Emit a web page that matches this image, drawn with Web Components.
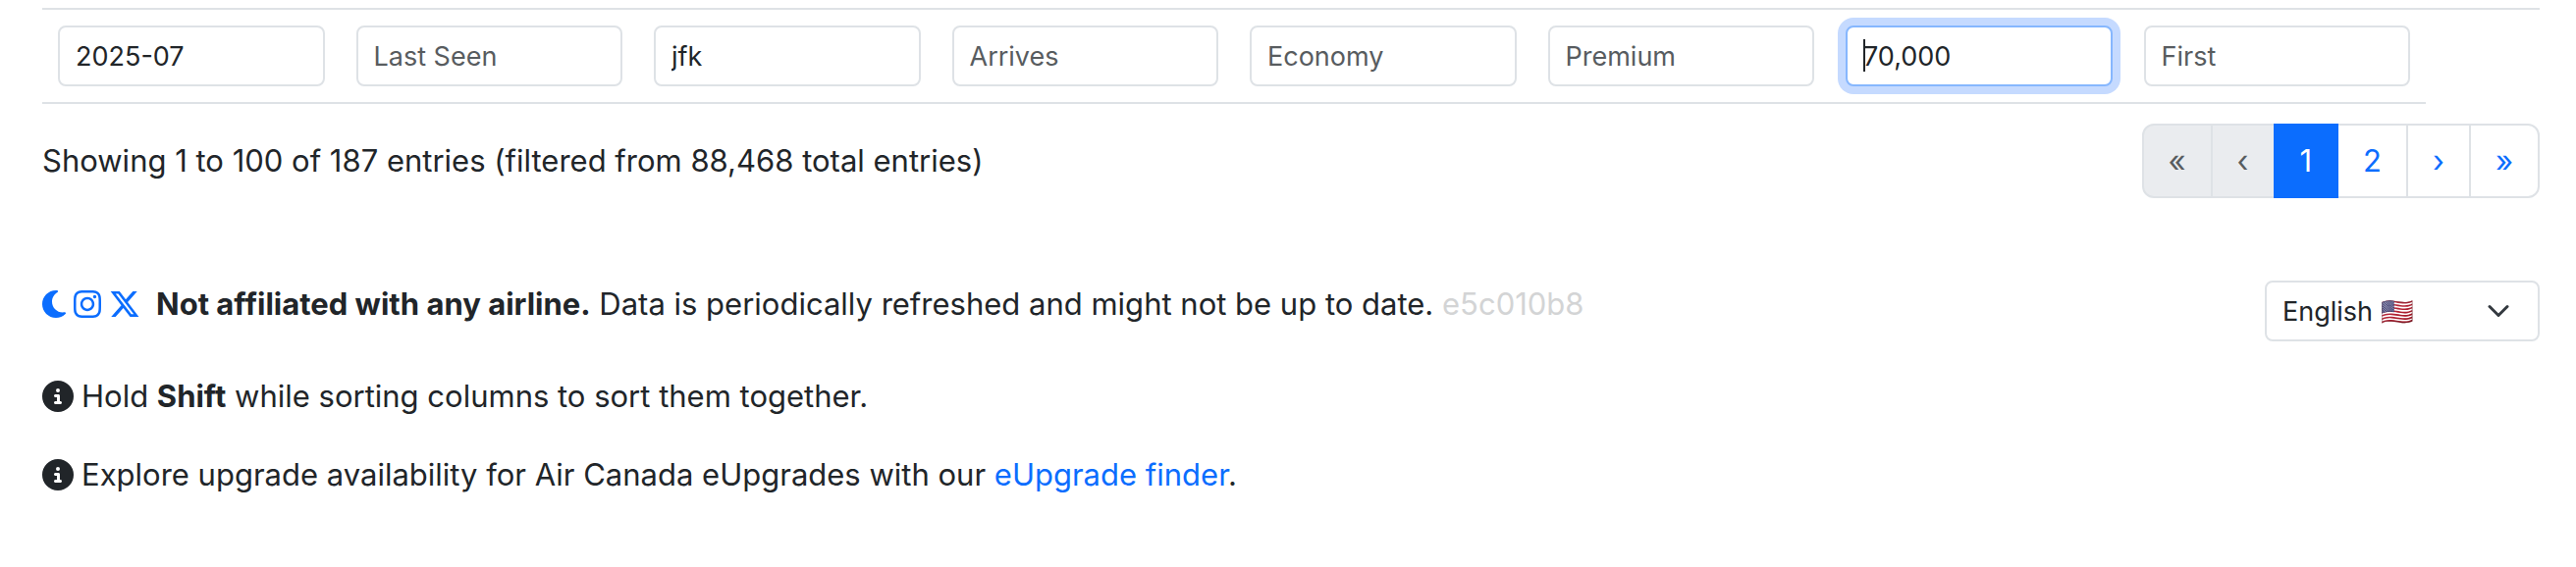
<!DOCTYPE html>
<html lang="en">
<head>
<meta charset="utf-8">
<title>Flight availability</title>
<style>
  body { margin: 0; background: #fff; color: #212529; font: 31px/48px Inter, "Liberation Sans", sans-serif; }
</style>
</head>
<body>
<flight-page></flight-page>

<template id="filter-field">
  <style>
    :host { display: block; position: relative; }
    input { box-sizing: border-box; display: block; width: 100%; height: 62px; margin: 0; padding: 8px 16px; border: 2px solid #dee2e6; border-radius: 8px; background: #fff; color: #212529; font: inherit; outline: 0; caret-color: transparent; }
    input::placeholder { color: #585c5f; opacity: 1; }
    :host([active]) input { border-color: #86b7fe; box-shadow: 0 0 0 8px #c5daff; }
    .caret { display: none; position: absolute; left: 18px; top: 14px; width: 2px; height: 33px; background: #212529; }
    :host([active]) .caret { display: block; }
  </style>
  <input type="text">
  <span class="caret"></span>
</template>

<template id="filter-row">
  <style>
    :host { display: block; border-top: 2px solid #dee2e6; padding-right: 116px; }
    table { width: 100%; table-layout: fixed; border-collapse: separate; border-spacing: 0; font-size: 27px; line-height: 42px; }
    td { padding: 16px; border-bottom: 2px solid #dee2e6; }
  </style>
  <table><tbody><tr>
    <td><filter-field label="Date" value="2025-07"></filter-field></td>
    <td><filter-field label="Last Seen"></filter-field></td>
    <td><filter-field label="Departs" value="jfk"></filter-field></td>
    <td><filter-field label="Arrives"></filter-field></td>
    <td><filter-field label="Economy"></filter-field></td>
    <td><filter-field label="Premium"></filter-field></td>
    <td><filter-field label="Business" value="70,000" active></filter-field></td>
    <td><filter-field label="First"></filter-field></td>
  </tr></tbody></table>
</template>

<template id="page-nav">
  <style>
    :host { display: block; }
    nav { display: flex; }
    button { box-sizing: border-box; height: 76px; margin: 0 0 0 -2px; padding: 12px 25px; border: 2px solid #dee2e6; background: #fff; color: #0b6dfe; font: inherit; cursor: pointer; }
    button:first-child { margin-left: 0; border-radius: 12px 0 0 12px; }
    button:last-child { border-radius: 0 12px 12px 0; }
    button:disabled { background: #eaecef; color: #585c5f; cursor: default; }
    button[aria-current] { position: relative; background: #0b6dfe; border-color: #0b6dfe; color: #fff; }
  </style>
  <nav aria-label="Pagination">
    <button type="button" aria-label="First" disabled>«</button>
    <button type="button" aria-label="Previous" disabled>‹</button>
    <button type="button" aria-current="page">1</button>
    <button type="button">2</button>
    <button type="button" aria-label="Next">›</button>
    <button type="button" aria-label="Last">»</button>
  </nav>
</template>

<template id="glyph-icon">
  <style>
    :host { display: inline-flex; }
    svg { display: block; height: 32px; fill: currentColor; }
  </style>
  <svg aria-hidden="true"><path/></svg>
</template>

<template id="language-select">
  <style>
    :host { display: block; }
    select { box-sizing: border-box; display: block; width: 280px; height: 62px; margin: 0; padding: 6px 72px 10px 16px; border: 2px solid #dee2e6; border-radius: 8px; appearance: none; color: #212529; font: inherit; font-size: 27px;
      background: #fff url("data:image/svg+xml,%3csvg xmlns='http://www.w3.org/2000/svg' viewBox='0 0 16 16'%3e%3cpath fill='none' stroke='%23343a40' stroke-linecap='round' stroke-linejoin='round' stroke-width='2' d='m2 5 6 6 6-6'/%3e%3c/svg%3e") no-repeat right 24px center / 32px 24px; }
  </style>
  <select aria-label="Language"><option>English 🇺🇸</option></select>
</template>

<template id="info-note">
  <style>
    :host { display: flex; align-items: center; gap: 8px; }
  </style>
  <glyph-icon name="info"></glyph-icon>
  <span><slot></slot></span>
</template>

<template id="flight-page">
  <style>
    :host { display: block; padding: 8px 37px 70px 43px; }
    a { color: #0b6dfe; text-decoration: none; }
    .summary { display: flex; justify-content: space-between; align-items: center; margin-top: 20px; }
    footer { display: grid; gap: 32px; margin-top: 84px; }
    .top { display: flex; justify-content: space-between; align-items: flex-start; }
    .about, .links { display: flex; align-items: center; gap: 8px; }
    .about { gap: 16px; }
    .links a { display: flex; }
    .hash { color: #d3d4d5; }
  </style>
  <filter-row></filter-row>
  <div class="summary">
    <span>Showing 1 to 100 of 187 entries (filtered from 88,468 total entries)</span>
    <page-nav></page-nav>
  </div>
  <footer>
    <div class="top">
      <div class="about">
        <div class="links">
          <a href="#theme" aria-label="Dark mode"><glyph-icon name="moon"></glyph-icon></a>
          <a href="#instagram" aria-label="Instagram"><glyph-icon name="instagram"></glyph-icon></a>
          <a href="#x" aria-label="X"><glyph-icon name="x"></glyph-icon></a>
        </div>
        <span><b>Not affiliated with any airline.</b> Data is periodically refreshed and might not be up to date. <span class="hash">e5c010b8</span></span>
      </div>
      <language-select></language-select>
    </div>
    <info-note>Hold <b>Shift</b> while sorting columns to sort them together.</info-note>
    <info-note>Explore upgrade availability for Air Canada eUpgrades with our <a href="#eupgrade">eUpgrade finder</a>.</info-note>
  </footer>
</template>

<script>
  const GLYPHS = {
    moon: [384, "M223.5 32C100 32 0 132.3 0 256S100 480 223.5 480c60.6 0 115.5-24.2 155.8-63.4c5-4.9 6.3-12.5 3.1-18.7s-10.1-9.7-17-8.5c-9.8 1.7-19.8 2.6-30.1 2.6c-96.9 0-175.5-78.8-175.5-176c0-65.8 36-123.1 89.3-153.3c6.1-3.5 9.2-10.5 7.7-17.3s-7.3-11.9-14.3-12.5c-6.3-.5-12.6-.8-19-.8z"],
    instagram: [448, "M224.1 141c-63.6 0-114.9 51.3-114.9 114.9s51.3 114.9 114.9 114.9S339 319.5 339 255.9 287.7 141 224.1 141zm0 189.6c-41.1 0-74.7-33.5-74.7-74.7s33.5-74.7 74.7-74.7 74.7 33.5 74.7 74.7-33.6 74.7-74.7 74.7zm146.4-194.3c0 14.9-12 26.8-26.8 26.8-14.9 0-26.8-12-26.8-26.8s12-26.8 26.8-26.8 26.8 12 26.8 26.8zm76.1 27.2c-1.7-35.9-9.9-67.7-36.2-93.9-26.2-26.2-58-34.4-93.9-36.2-37-2.1-147.9-2.1-184.9 0-35.8 1.7-67.6 9.9-93.9 36.1s-34.4 58-36.2 93.9c-2.1 37-2.1 147.9 0 184.9 1.7 35.9 9.9 67.7 36.2 93.9s58 34.4 93.9 36.2c37 2.1 147.9 2.1 184.9 0 35.9-1.7 67.7-9.9 93.9-36.2 26.2-26.2 34.4-58 36.2-93.9 2.1-37 2.1-147.8 0-184.8zM398.8 388c-7.8 19.6-22.9 34.7-42.6 42.6-29.5 11.7-99.5 9-132.1 9s-102.7 2.6-132.1-9c-19.6-7.8-34.7-22.9-42.6-42.6-11.7-29.5-9-99.5-9-132.1s-2.6-102.7 9-132.1c7.8-19.6 22.9-34.7 42.6-42.6 29.5-11.7 99.5-9 132.1-9s102.7-2.6 132.1 9c19.6 7.8 34.7 22.9 42.6 42.6 11.7 29.5 9 99.5 9 132.1s2.7 102.7-9 132.1z"],
    x: [512, "M389.2 48h70.6L305.6 224.2 487 464H345L233.7 318.6 106.5 464H35.8L200.7 275.5 26.8 48H172.4L272.9 180.9 389.2 48zM364.4 421.8h39.1L151.1 88h-42L364.4 421.8z"],
    info: [512, "M256 512A256 256 0 1 0 256 0a256 256 0 1 0 0 512zM216 336h24V272H216c-13.3 0-24-10.7-24-24s10.7-24 24-24h48c13.3 0 24 10.7 24 24v88h8c13.3 0 24 10.7 24 24s-10.7 24-24 24H216c-13.3 0-24-10.7-24-24s10.7-24 24-24zm40-208a32 32 0 1 1 0 64 32 32 0 1 1 0-64z"]
  };

  class TemplateElement extends HTMLElement {
    connectedCallback() {
      if (this.shadowRoot) return;
      const root = this.attachShadow({ mode: "open" });
      root.append(document.getElementById(this.localName).content.cloneNode(true));
      this.ready(root);
    }
    ready() {}
  }

  customElements.define("filter-field", class extends TemplateElement {
    ready(root) {
      const input = root.querySelector("input");
      const label = this.getAttribute("label");
      input.placeholder = label;
      input.setAttribute("aria-label", label);
      input.value = this.getAttribute("value") || "";
    }
  });
  customElements.define("glyph-icon", class extends TemplateElement {
    ready(root) {
      const [width, d] = GLYPHS[this.getAttribute("name")];
      const svg = root.querySelector("svg");
      svg.setAttribute("viewBox", `0 0 ${width} 512`);
      svg.setAttribute("width", width / 16);
      svg.firstElementChild.setAttribute("d", d);
    }
  });
  for (const name of ["filter-row", "page-nav", "language-select", "info-note", "flight-page"]) {
    customElements.define(name, class extends TemplateElement {});
  }
</script>
</body>
</html>
